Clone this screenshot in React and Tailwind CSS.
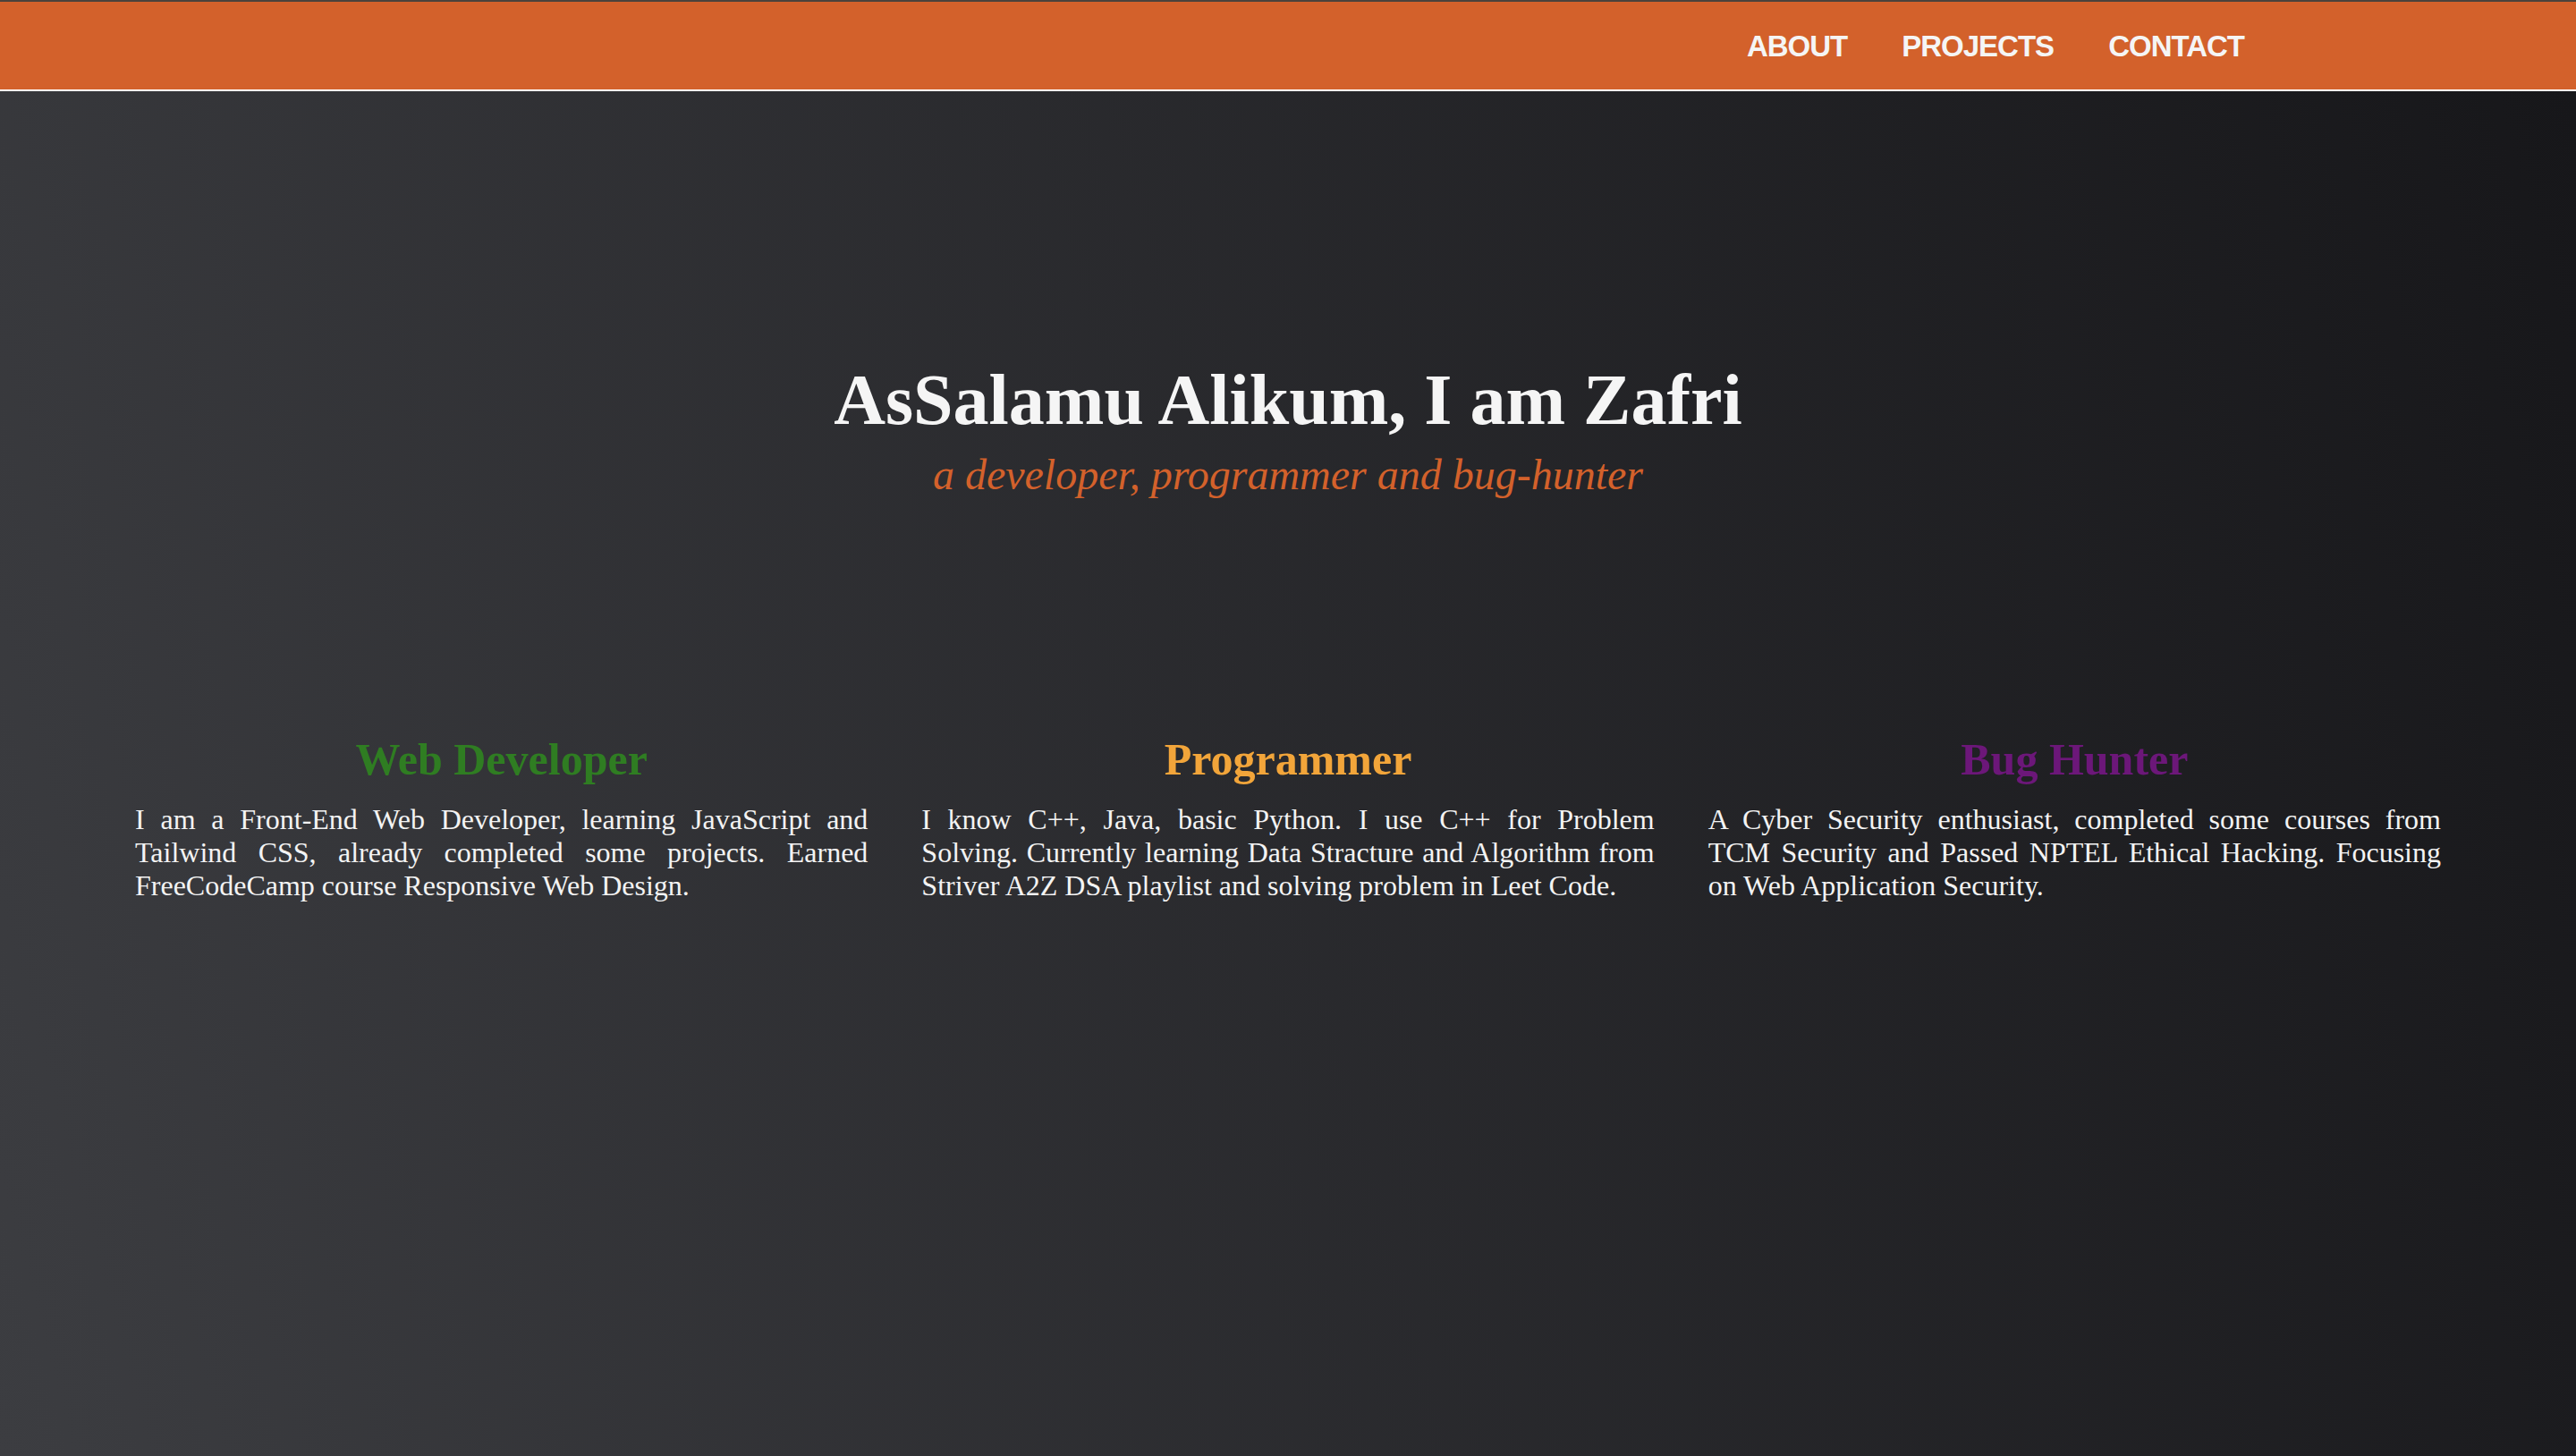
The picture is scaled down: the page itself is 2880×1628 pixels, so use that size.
export default function App() {
  const cols = [
    {
      title: "Web Developer",
      color: "text-[#2f7d22]",
      body: "I am a Front-End Web Developer, learning JavaScript and Tailwind CSS, already completed some projects. Earned FreeCodeCamp course Responsive Web Design.",
    },
    {
      title: "Programmer",
      color: "text-[#f2a53a]",
      body: "I know C++, Java, basic Python. I use C++ for Problem Solving. Currently learning Data Stracture and Algorithm from Striver A2Z DSA playlist and solving problem in Leet Code.",
    },
    {
      title: "Bug Hunter",
      color: "text-[#6c1779]",
      body: "A Cyber Security enthusiast, completed some courses from TCM Security and Passed NPTEL Ethical Hacking. Focusing on Web Application Security.",
    },
  ];
  return (
    <div className="min-h-screen flex flex-col bg-[#1a1a1c]">
      <header className="h-[102px] border-t-2 border-b-2 border-t-[#4b423c] border-b-white bg-[#d3612b] flex items-center justify-end pr-[371px] gap-[61px] font-['Liberation_Sans',Arial,sans-serif] font-bold text-[33px] text-[#f5f5f5] tracking-[-1px]">
        <a className="leading-none">ABOUT</a>
        <a className="leading-none">PROJECTS</a>
        <a className="leading-none">CONTACT</a>
      </header>
      <main className="flex-1 bg-linear-75 from-[#3c3d41] to-[#17171a] font-['Liberation_Serif','Times_New_Roman',serif] px-[151px]">
        <section className="pt-[299px] flex flex-col items-center text-center">
          <h1 className="text-[80px] leading-[92px] font-bold text-[#f5f5f5]">
            AsSalamu Alikum, I am Zafri
          </h1>
          <p className="mt-[10px] text-[48px] leading-[56px] italic text-[#d3612b]">
            a developer, programmer and bug-hunter
          </p>
        </section>
        <section className="mt-[260px] grid grid-cols-3 gap-[60px]">
          {cols.map((c) => (
            <div key={c.title} className="flex flex-col">
              <h2 className={`text-center text-[50px] leading-[60px] font-bold ${c.color}`}>
                {c.title}
              </h2>
              <p className="mt-[19px] text-[32px] leading-[37px] text-justify text-[#f3f3f3]">
                {c.body}
              </p>
            </div>
          ))}
        </section>
      </main>
    </div>
  );
}
